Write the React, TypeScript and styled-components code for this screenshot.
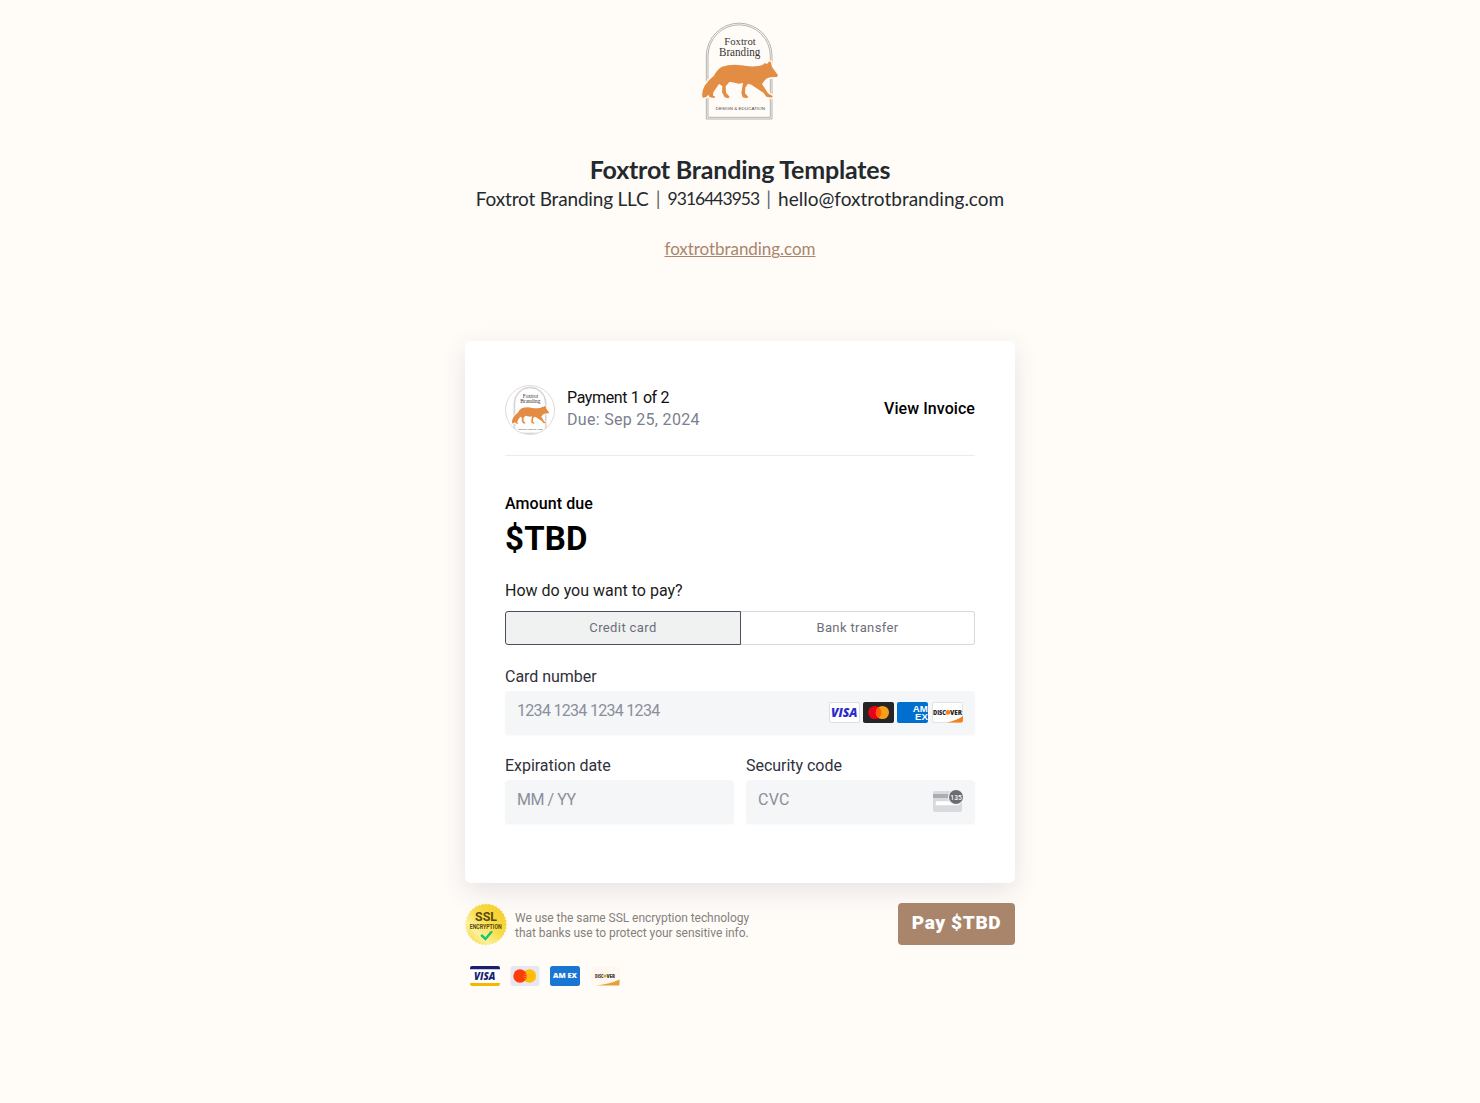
import React, { useState } from 'react';
import styled, { createGlobalStyle } from 'styled-components';

const GlobalStyle = createGlobalStyle`
  * {
    box-sizing: border-box;
  }

  body {
    margin: 0;
    background: #fffcf8;
    font-family: Roboto, 'Liberation Sans', sans-serif;
    font-size: 16px;
    color: #000;
  }

  svg {
    display: block;
    flex-shrink: 0;
    overflow: visible;
  }
`;

const Page = styled.div`
  display: flex;
  flex-direction: column;
  align-items: center;
  min-height: 1103px;
  padding-top: 15px;
`;

const BrandHeader = styled.header`
  display: flex;
  flex-direction: column;
  align-items: center;
  height: 326px;
  font-family: Lato, sans-serif;
  color: #24292e;
  white-space: nowrap;
`;

const BrandName = styled.h1`
  margin: 29px 0 0;
  font-size: 25px;
  font-weight: 700;
  line-height: 30px;
  letter-spacing: -0.2px;
`;

const BrandContact = styled.p`
  display: flex;
  margin: 2px 0 0;
  font-size: 19px;
  line-height: 26px;
`;

const Company = styled.span`
  letter-spacing: -0.18px;
`;

const Phone = styled.span`
  font-size: 17.5px;
  letter-spacing: -1px;
`;

const Divider = styled.span`
  width: 19px;
  text-align: center;
  color: #62666a;
`;

const BrandLink = styled.a`
  margin-top: 26px;
  font-size: 17px;
  line-height: 22px;
  letter-spacing: -0.05px;
  color: #a9856b;
  text-decoration: underline;
  text-decoration-thickness: 1px;
`;

const Card = styled.main`
  width: 550px;
  height: 542px;
  padding: 44px 40px 0;
  border-radius: 6px;
  background: #fff;
  box-shadow: 0 8px 26px rgba(50, 40, 70, 0.12);
`;

const Summary = styled.div`
  display: flex;
  align-items: flex-start;
  height: 71px;
  border-bottom: 1px solid #ebebed;
`;

const Avatar = styled.div`
  display: flex;
  align-items: center;
  justify-content: center;
  width: 50px;
  height: 50px;
  margin-right: 12px;
  border: 1px solid #dcdcde;
  border-radius: 50%;
  overflow: hidden;
`;

const Line = styled.div<{ $muted?: boolean; $spacing?: number }>`
  line-height: 22px;
  white-space: nowrap;
  color: ${({ $muted }) => ($muted ? '#7b7f8e' : '#111')};
  letter-spacing: ${({ $spacing = 0 }) => $spacing}px;
`;

const SummaryText = styled.div`
  flex: 1;
  padding-top: 2px;
`;

const ViewInvoice = styled.button`
  margin-top: 13px;
  padding: 0;
  border: 0;
  background: none;
  font: 500 16px/22px Roboto, sans-serif;
  letter-spacing: 0.07px;
`;

const AmountLabel = styled.div`
  margin-top: 37px;
  font-weight: 500;
  line-height: 22px;
  letter-spacing: 0.08px;
`;

const Amount = styled.div`
  margin-top: 3px;
  font-size: 33px;
  font-weight: 700;
  line-height: 42px;
  letter-spacing: 0.2px;
`;

const Question = styled.div`
  margin-top: 20px;
  line-height: 22px;
  color: #1c1c1c;
`;

const Methods = styled.div`
  display: grid;
  grid-template-columns: 236px 234px;
  height: 34px;
  margin-top: 9px;
`;

const Method = styled.button<{ $active: boolean }>`
  padding: 0;
  border: 1px solid ${({ $active }) => ($active ? '#4f4d60' : '#d8d9dd')};
  border-left-width: ${({ $active }) => ($active ? 1 : 0)}px;
  border-radius: ${({ $active }) => ($active ? '3px 0 0 3px' : '0 3px 3px 0')};
  background: ${({ $active }) => ($active ? '#f0f2f1' : '#fff')};
  font: 400 13px/20px Roboto, sans-serif;
  letter-spacing: 0.38px;
  color: #6c6e7c;
`;

const Fields = styled.div`
  display: grid;
  grid-template-columns: 1fr 1fr;
  gap: 20px 12px;
  margin-top: 21px;
`;

const Field = styled.label<{ $wide?: boolean }>`
  grid-column: ${({ $wide }) => ($wide ? 'span 2' : 'auto')};
  line-height: 22px;
  letter-spacing: -0.03px;
  color: #30313d;
`;

const InputBox = styled.div`
  display: flex;
  justify-content: space-between;
  height: 44px;
  margin-top: 3px;
  padding: 11px 12px;
  border-radius: 4px;
  background: #f5f6f8;
  box-shadow: 0 1px 2px rgba(0, 0, 0, 0.025);
`;

const Placeholder = styled.span<{ $spacing?: number }>`
  line-height: 18px;
  color: #8b8e9b;
  letter-spacing: ${({ $spacing = 0 }) => $spacing}px;
`;

const Brands = styled.div`
  display: flex;
  gap: 3px;

  svg:last-child {
    margin-left: 1px;
  }
`;

const Footer = styled.footer`
  display: flex;
  width: 550px;
  margin-top: 20px;
`;

const SslText = styled.p`
  flex: 1;
  margin: 8px 0 0 8px;
  font-size: 12px;
  line-height: 15px;
  letter-spacing: -0.05px;
  color: #85807e;
`;

const PayButton = styled.button`
  width: 117px;
  height: 42px;
  padding: 0 0 3px;
  border: 0;
  border-radius: 4px;
  background: #a9856b;
  color: #fff;
  font: 900 19px/24px Roboto, sans-serif;
  letter-spacing: 0.65px;
`;

const Accepted = styled.div`
  display: flex;
  gap: 10px;
  width: 550px;
  margin-top: 20px;
  padding-left: 5px;
`;

const FoxLogo: React.FC<{ width: number; ground: string }> = ({ width, ground }) => (
  <svg width={width} height={width * 1.1} viewBox="0 0 300 330">
    <g fill="none" stroke="#85817d" strokeWidth="1.800">
      <path d="M49 312V123a98.500 98.500 0 0 1 197 0V312Z" />
      <path d="M54 307V123a93.500 93.500 0 0 1 187 0V307Z" />
    </g>
    <g fill="#383532" fontFamily="Liberation Serif, serif">
      <text x="103" y="90" fontSize="34" textLength="94" lengthAdjust="spacingAndGlyphs">
        Foxtrot
      </text>
      <text x="87" y="123" fontSize="35" textLength="124" lengthAdjust="spacingAndGlyphs">
        Branding
      </text>
    </g>
    <path
      d="M38 248Q33 232 44 212Q55 194 72 182Q82 162 96 155Q112 149 136 149L154 151Q180 156 206 153Q219 151 224 144L231 147L238 139L243 142L246 156L264 181L261 186L243 187Q231 188 225 195L216 207Q226 222 234 235L248 243L246 248L229 245L221 234L184 209L174 206L166 218L165 235L175 246L170 250L158 247L154 234L159 204L147 206L119 200L107 214L108 233L119 245L115 250L104 247L96 232L97 213L87 207L70 232L69 242L76 245L73 249L59 247L55 239Q50 248 38 248Z"
      fill="#e38d44"
      stroke={ground}
      strokeWidth="9"
      paintOrder="stroke"
      strokeLinejoin="round"
    />
    <text
      x="77"
      y="285"
      fontSize="12"
      fontFamily="Liberation Sans, sans-serif"
      fill="#4b4845"
      textLength="148"
      lengthAdjust="spacingAndGlyphs"
    >
      DESIGN &amp; EDUCATION
    </text>
  </svg>
);

const brandText = {
  fontFamily: 'Open Sans, sans-serif',
  fontWeight: 800,
  lengthAdjust: 'spacingAndGlyphs' as const,
};

const VisaIcon = () => (
  <svg width="31" height="21" viewBox="0 0 31 21">
    <rect x=".5" y=".5" width="30" height="20" rx="1.500" fill="#fff" stroke="#dddfe3" />
    <text x="2" y="15" fontSize="12" fontStyle="italic" fill="#2a2ccb" textLength="26.500" {...brandText}>
      VISA
    </text>
  </svg>
);

const MastercardIcon = () => (
  <svg width="31" height="21" viewBox="0 0 31 21">
    <rect width="31" height="21" rx="2" fill="#252525" />
    <circle cx="11.800" cy="10.500" r="6.600" fill="#eb001b" />
    <circle cx="19.400" cy="10.500" r="6.600" fill="#f79e1b" />
    <path d="M15.600 5.100a6.600 6.600 0 0 1 0 10.800a6.600 6.600 0 0 1 0-10.800" fill="#ff5f00" />
  </svg>
);

const AmexIcon = () => (
  <svg width="31" height="21" viewBox="0 0 31 21">
    <rect width="31" height="21" rx="2" fill="#016fd0" />
    <g fill="#fff" fontSize="9" fontFamily="Liberation Sans" fontWeight="700">
      <text x="15.800" y="10" textLength="15" lengthAdjust="spacingAndGlyphs">AM</text>
      <text x="18" y="17.600" textLength="12.800" lengthAdjust="spacingAndGlyphs">EX</text>
    </g>
  </svg>
);

const DiscoverIcon = () => (
  <svg width="31" height="21" viewBox="0 0 31 21">
    <rect x=".5" y=".5" width="30" height="20" rx="1.500" fill="#fff" stroke="#e2e3e5" />
    <path d="M15 20.500Q25 18 31 14V18.500Q31 20.500 29 20.500Z" fill="#f58020" />
    <g fontSize="6" fill="#262626">
      <text x="1" y="12.600" textLength="13" {...brandText}>DISC</text>
      <text x="18" y="12.600" textLength="12" {...brandText}>VER</text>
    </g>
    <circle cx="16" cy="10.400" r="2.300" fill="#f58020" />
  </svg>
);

const CvcIcon = () => (
  <svg width="31" height="22" viewBox="0 0 31 22">
    <rect x="1" width="29" height="21" rx="2" fill="#d9dadd" />
    <path d="M1 3h29v4H1z" fill="#abadb3" />
    <rect x="3.700" y="10.300" width="23.600" height="4" rx="1" fill="#fff" />
    <circle cx="24" cy="6" r="8" fill="#f5f6f8" />
    <circle cx="24" cy="6" r="7" fill="#6a6b73" />
    <text
      x="18.300"
      y="8.900"
      fontSize="8"
      fontFamily="Roboto"
      fontWeight="500"
      fill="#fff"
      textLength="11.500"
      lengthAdjust="spacingAndGlyphs"
      letterSpacing="0"
    >
      135
    </text>
  </svg>
);

// scalloped edge of the seal, alternating between two radii
const sealPoints = Array.from({ length: 72 }, (_, i) => {
  const angle = (i * Math.PI) / 36;
  const radius = i % 2 ? 19.8 : 21;
  return `${21 + radius * Math.cos(angle)},${21.5 + radius * Math.sin(angle)}`;
}).join(' ');

const SslSeal = () => (
  <svg width="42" height="43" viewBox="0 0 42 43">
    <defs>
      <linearGradient id="gold" x1="1" y1="0" x2="0" y2="1">
        <stop offset="0" stopColor="#f4c91f" />
        <stop offset=".45" stopColor="#f8dc4b" />
        <stop offset=".7" stopColor="#fcf09a" />
        <stop offset="1" stopColor="#f4d030" />
      </linearGradient>
    </defs>
    <polygon points={sealPoints} fill="url(#gold)" />
    <g fill="#5c4a0c" fontFamily="Roboto" fontWeight="700">
      <text x="10" y="17.800" fontSize="12.500" textLength="22" lengthAdjust="spacingAndGlyphs">SSL</text>
      <text x="4.700" y="25.500" fontSize="6.500" textLength="32" lengthAdjust="spacingAndGlyphs">ENCRYPTION</text>
    </g>
    <path d="M16.800 32.500l3.600 3.500 6-7" fill="none" stroke="#1cc671" strokeWidth="2.500" strokeLinecap="round" />
  </svg>
);

const SmallVisa = () => (
  <svg width="30" height="20" viewBox="0 0 30 20">
    <rect width="30" height="20" rx="2" fill="#fff" />
    <path d="M0 3.200V2a2 2 0 0 1 2-2H28a2 2 0 0 1 2 2V3.200Z" fill="#1a1f71" />
    <path d="M0 17V18a2 2 0 0 0 2 2H28a2 2 0 0 0 2-2V17Z" fill="#f7b600" />
    <text x="4" y="14" fontSize="11" fontStyle="italic" fill="#1a1f71" textLength="21.500" {...brandText}>
      VISA
    </text>
  </svg>
);

const SmallMastercard = () => (
  <svg width="30" height="20" viewBox="0 0 30 20">
    <rect x=".5" width="29" height="20" rx="2" fill="#e6e7f0" />
    <circle cx="19.500" cy="10" r="6.700" fill="#ffbd0a" />
    <circle cx="10" cy="10" r="6.700" fill="#ff3b0a" />
    <path d="M14 8.500h3M13.500 10.500h3.500M14 12.500h3" stroke="#ff7c1f" />
  </svg>
);

const SmallAmex = () => (
  <svg width="30" height="20" viewBox="0 0 30 20">
    <rect width="30" height="20" rx="2.500" fill="#1976d2" />
    <text x="3" y="12" fontSize="6.200" fill="#fff" textLength="24" {...brandText}>
      AM EX
    </text>
  </svg>
);

const SmallDiscover = () => (
  <svg width="30" height="20" viewBox="0 0 30 20">
    <rect x="2" y="1" width="28" height="19" rx="1" fill="#fff8f1" />
    <path d="M6.500 19.500Q20 18 29.500 13.500V18.500Q29.500 19.500 28.500 19.500Z" fill="#e5a03a" />
    <g fontSize="4.500" fill="#3b3733">
      <text x="5" y="11.500" textLength="8.500" {...brandText}>DISC</text>
      <text x="16.500" y="11.500" textLength="8.500" {...brandText}>VER</text>
    </g>
    <circle cx="15" cy="10" r="1.600" fill="#e5a03a" />
  </svg>
);

const methods = ['Credit card', 'Bank transfer'];

const App: React.FC = () => {
  const [method, setMethod] = useState(methods[0]);

  return (
    <Page>
      <GlobalStyle />
      <BrandHeader>
        <FoxLogo width={100} ground="#fffcf8" />
        <BrandName>Foxtrot Branding Templates</BrandName>
        <BrandContact>
          <Company>Foxtrot Branding LLC</Company>
          <Divider>|</Divider>
          <Phone>9316443953</Phone>
          <Divider>|</Divider>
          <span>hello@foxtrotbranding.com</span>
        </BrandContact>
        <BrandLink>foxtrotbranding.com</BrandLink>
      </BrandHeader>
      <Card>
        <Summary>
          <Avatar>
            <FoxLogo width={49} ground="#fff" />
          </Avatar>
          <SummaryText>
            <Line $spacing={-0.38}>Payment 1 of 2</Line>
            <Line $muted $spacing={0.3}>
              Due: Sep 25, 2024
            </Line>
          </SummaryText>
          <ViewInvoice type="button">View Invoice</ViewInvoice>
        </Summary>
        <AmountLabel>Amount due</AmountLabel>
        <Amount>$TBD</Amount>
        <Question>How do you want to pay?</Question>
        <Methods>
          {methods.map((name) => (
            <Method key={name} type="button" $active={name === method} onClick={() => setMethod(name)}>
              {name}
            </Method>
          ))}
        </Methods>
        <Fields>
          <Field $wide>
            Card number
            <InputBox>
              <Placeholder $spacing={-0.7}>1234 1234 1234 1234</Placeholder>
              <Brands>
                <VisaIcon />
                <MastercardIcon />
                <AmexIcon />
                <DiscoverIcon />
              </Brands>
            </InputBox>
          </Field>
          <Field>
            Expiration date
            <InputBox>
              <Placeholder $spacing={-0.45}>MM / YY</Placeholder>
            </InputBox>
          </Field>
          <Field>
            Security code
            <InputBox>
              <Placeholder $spacing={0.3}>CVC</Placeholder>
              <CvcIcon />
            </InputBox>
          </Field>
        </Fields>
      </Card>
      <Footer>
        <SslSeal />
        <SslText>
          We use the same SSL encryption technology
          <br />
          that banks use to protect your sensitive info.
        </SslText>
        <PayButton type="button">Pay $TBD</PayButton>
      </Footer>
      <Accepted>
        <SmallVisa />
        <SmallMastercard />
        <SmallAmex />
        <SmallDiscover />
      </Accepted>
    </Page>
  );
};

export default App;
